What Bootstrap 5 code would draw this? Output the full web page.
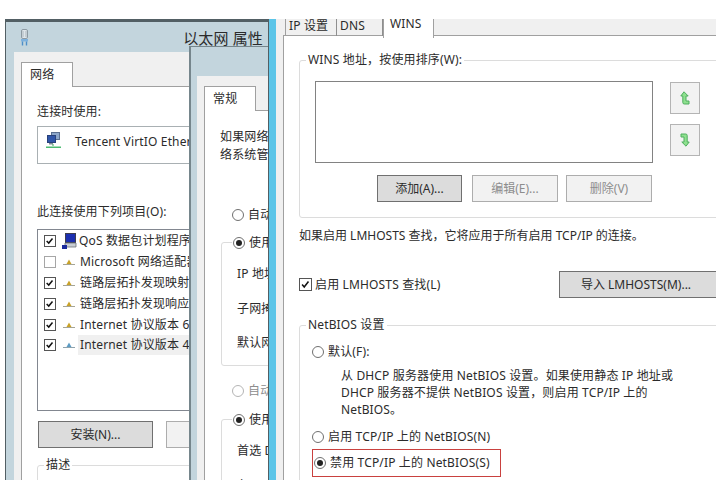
<!DOCTYPE html>
<html lang="zh-CN">
<head>
  <meta charset="UTF-8">
  <title>以太网 属性</title>
  <link href="https://cdn.jsdelivr.net/npm/bootstrap@5.3.0/dist/css/bootstrap.min.css" rel="stylesheet">
  <style>
    html, body { height: 100%; overflow: hidden; }
    body { background: #fff; color: #2b2b2b; font: 12px/18px "Noto Sans", "Noto Sans CJK SC", sans-serif; letter-spacing: .15px; position: relative; }
    svg { display: block; flex: none; }

    /* windows on the desktop */
    .desk-win { position: absolute; overflow: hidden; background: #c3d5dd; }
    .win-main { left: 5px; top: 19px; width: 264px; height: 461px; border: solid #525f64; border-width: 3px 1px 0 1px; }
    .win-inner { left: 183px; top: 24px; width: 82px; height: 437px; border-left: 2px solid #76868c; border-top: 1px solid #76868c; }
    .win-strip { position: absolute; left: 269px; top: 19px; width: 7px; height: 461px; background: #5cc5e8; }
    .win-right { left: 276px; top: 19px; width: 440px; height: 461px; background: #f0f0f0; }

    .title-row { height: 30px; padding: 7px 5px 0 14px; font-size: 15px; }
    .sheet { background: #f0f0f0; height: 100%; margin-left: 8px; padding: 10px 0 0 7px; }
    .inner-title { height: 29px; }
    .inner-sheet { margin-left: 6px; padding: 10px 0 0 7px; background: #f0f0f0; height: 100%; }

    .tab-item { display: block; background: #fff; border: 1px solid #a0a0a0; border-bottom: 0; width: 52px; height: 25px; padding: 3px 0 0 8px; margin-bottom: -1px; position: relative; }
    .tab-page { background: #fff; border: 1px solid #a0a0a0; height: 100%; padding: 0 0 0 15px; width: 400px; }

    .cap-a { margin-top: 16px; }
    .conn-box { border: 1px solid #a9b0b3; height: 38px; margin-top: 5px; padding: 5px 0 0 8px; gap: 14px; background: #fff; white-space: nowrap; }
    .conn-box span { margin-top: 1px; }
    .cap-b { margin-top: 39px; }
    .item-box { border: 1px solid #828790; height: 182px; margin-top: 8px; padding-top: 1px; white-space: nowrap; position: relative; }
    .item-row { height: 20.8px; padding-left: 6px; gap: 6px; }
    .item-row .item-txt { padding: 0 2px; line-height: 20px; margin-left: -4px; }
    .item-row .item-qos { margin-left: -7px; }
    .item-sel { background: #f0f0f0; width: 200px; }
    .chk { width: 12px; height: 12px; border: 1px solid #555; background: #fff; flex: none; }
    .chk-off { border-color: #a6a6a6; }

    .win-btn { --bs-btn-padding-y: 0; --bs-btn-padding-x: 0; --bs-btn-font-size: 12px; --bs-btn-line-height: 1; --bs-btn-border-radius: 0; --bs-btn-color: #2b2b2b; --bs-btn-bg: #dcdcdc; --bs-btn-border-color: #707070; height: 27px; flex: none; }
    .win-btn-off { --bs-btn-color: #8d8d8d; --bs-btn-bg: #f2f2f2; --bs-btn-border-color: #adadad; }
    .btn-row-l { margin: 10px 0 0 1px; gap: 13px; }

    .grp { border: 1px solid #dcdcdc; border-radius: 3px; padding: 0 0 15px 15px; margin: 0; min-width: 0; }
    .grp legend { float: none; width: auto; font-size: 12px; line-height: 18px; margin: 0 0 0 -9px; padding: 0 2px; }

    .radio-mark { width: 12px; height: 12px; border: 1px solid #707070; border-radius: 50%; background: #fff; flex: none; position: relative; }
    .radio-on::after { content: ""; position: absolute; left: 2px; top: 2px; width: 6px; height: 6px; background: #222; border-radius: 50%; }
    .radio-dim { border-color: #b5b5b5; }

    /* right hand dialog */
    .tab-strip { height: 17px; border-bottom: 1px solid #a0a0a0; margin-left: 7px; position: relative; padding-left: 2px; }
    .tab-back { height: 17px; border-right: 1px solid #8e8e8e; padding: 0 5px 0 3px; line-height: 13px; }
    .tab-back-a { width: 52px; border-left: 1px solid #a0a0a0; }
    .tab-back-b { width: 46px; }
    .tab-front { height: 19px; width: 51px; background: #fff; border: 1px solid #a0a0a0; border-top: 0; border-bottom: 0; padding: 0 0 0 6px; line-height: 9px; }
    .page-right { background: #fff; border-left: 1px solid #a0a0a0; margin-left: 7px; height: 444px; padding: 15px 0 0 15px; overflow: hidden; white-space: nowrap; }
    .grp-wins { width: 440px; }
    .list-empty { width: 338px; height: 82px; margin-top: 12px; border: 1px solid #828282; }
    .arrow-col { margin: 13px 0 0 17px; gap: 10px; }
    .arrow-btn { width: 30px; height: 32px; background: #f2f2f2; border: 1px solid #b4b4b4; }
    .wins-btns { margin: 12px 0 0 62px; }
    .btn-add { width: 85px; margin-right: 10px; }
    .btn-edit { width: 86px; margin-right: 8px; }
    .btn-del { width: 86px; }
    .note { margin-top: 9px; letter-spacing: 0; }
    .lm-row { margin-top: 26px; height: 27px; }
    .lm-chk { gap: 3px; }
    .lm-chk .chk { width: 13px; height: 13px; }
    .imp-btn { width: 170px; margin: 0 -13px 0 auto; padding-right: 16px; }
    .grp-net { width: 440px; margin-top: 18px; }
    .net-line { gap: 4px; margin-left: -3px; }
    .net-first { margin-top: 9px; }
    .net-desc { margin: 6px 0 0 26px; line-height: 17px; }
    .net-mid { margin-top: 10px; }
    .net-box { margin: 3px 0 0 -3px; width: 189px; height: 28px; border: 1px solid #c9413f; gap: 4px; padding-left: 1px; }

    /* inner dialog lines */
    .inner-page { padding: 0; width: 300px; white-space: nowrap; }
    .in-top { margin: 17px 0 0 15px; }
    .in-radio { gap: 4px; margin-left: 27px; }
    .in-auto { margin-top: 42px; }
    .in-grp { border: 1px solid #dcdcdc; border-radius: 3px; margin: 18px 0 0 16px; height: 124px; position: relative; padding: 22px 0 0 15px; }
    .in-grp-b { height: 120px; margin-top: 19px; }
    .in-grp .in-head { position: absolute; left: 10px; top: -9px; background: #fff; gap: 4px; padding: 0 1px; }
    .in-grp div.in-ln { height: 34.5px; line-height: 18px; }
    .in-dim { margin-top: 16px; color: #8d8d8d; }
  </style>
</head>
<body>
  <div class="desk-win win-main">
    <div class="title-row d-flex justify-content-between">
      <svg width="10" height="17" viewBox="0 0 10 17"><rect x="1.500" y=".5" width="6" height="9" rx="1.500" fill="#dfe6ea" stroke="#8d9aa2"/><path d="M3 2v6M6 2v6" stroke="#aab6bd"/><path d="M1 10h7v2.500H1z" fill="#7fb2de"/><path d="M2.500 12.500v4M6.500 12.500v4" stroke="#4d8fc9" stroke-width="1.400"/></svg>
      <span>以太网 属性</span>
    </div>
    <div class="sheet">
      <span class="tab-item">网络</span>
      <div class="tab-page">
        <div class="cap-a">连接时使用:</div>
        <div class="conn-box d-flex">
          <svg width="15" height="17" viewBox="0 0 15 17"><rect x="5.500" y=".5" width="8" height="7" fill="#8ca6c9" stroke="#5a6f8f"/><rect x="1.500" y="3.500" width="8" height="7" fill="#2f55a8" stroke="#28417a"/><path d="M3 11v1.500h4V11z" fill="#7d8a96"/><path d="M7 12v2" stroke="#3aa35d"/><path d="M0 14.500h15V16H0z" fill="#4dbb72"/></svg>
          <span>Tencent VirtIO Ethernet Adapter</span>
        </div>
        <div class="cap-b">此连接使用下列项目(O):</div>
        <div class="item-box">
          <div class="item-row d-flex align-items-center">
            <svg class="chk" viewBox="0 0 12 12"><path d="M2 6l2.500 2.500L9 3" fill="none" stroke="#111" stroke-width="1.800"/></svg>
            <svg width="16" height="16" viewBox="0 0 16 16"><rect x="3.500" y=".5" width="10" height="9" fill="#1c2fb0" stroke="#3d3d50"/><path d="M3 10h11v4H3z" fill="#c9ced3" stroke="#6c7278" stroke-width=".8"/><rect x="0" y="12" width="5" height="4" fill="#1a2a9c"/></svg>
            <span class="item-txt item-qos">QoS 数据包计划程序</span>
          </div>
          <div class="item-row d-flex align-items-center">
            <span class="chk chk-off"></span>
            <svg width="14" height="8" viewBox="0 0 14 8"><path d="M1 6.500h12" stroke="#a5a596"/><path d="M7 1.500l2.500 4.500h-5z" fill="#c9a227"/></svg>
            <span class="item-txt">Microsoft 网络适配器多路传送器协议</span>
          </div>
          <div class="item-row d-flex align-items-center">
            <svg class="chk" viewBox="0 0 12 12"><path d="M2 6l2.500 2.500L9 3" fill="none" stroke="#111" stroke-width="1.800"/></svg>
            <svg width="14" height="8" viewBox="0 0 14 8"><path d="M1 6.500h12" stroke="#a5a596"/><path d="M7 1.500l2.500 4.500h-5z" fill="#c9a227"/></svg>
            <span class="item-txt">链路层拓扑发现映射器 I/O 驱动程序</span>
          </div>
          <div class="item-row d-flex align-items-center">
            <svg class="chk" viewBox="0 0 12 12"><path d="M2 6l2.500 2.500L9 3" fill="none" stroke="#111" stroke-width="1.800"/></svg>
            <svg width="14" height="8" viewBox="0 0 14 8"><path d="M1 6.500h12" stroke="#a5a596"/><path d="M7 1.500l2.500 4.500h-5z" fill="#c9a227"/></svg>
            <span class="item-txt">链路层拓扑发现响应程序</span>
          </div>
          <div class="item-row d-flex align-items-center">
            <svg class="chk" viewBox="0 0 12 12"><path d="M2 6l2.500 2.500L9 3" fill="none" stroke="#111" stroke-width="1.800"/></svg>
            <svg width="14" height="8" viewBox="0 0 14 8"><path d="M1 6.500h12" stroke="#a5a596"/><path d="M7 1.500l2.500 4.500h-5z" fill="#c9a227"/></svg>
            <span class="item-txt">Internet 协议版本 6 (TCP/IPv6)</span>
          </div>
          <div class="item-row d-flex align-items-center">
            <svg class="chk" viewBox="0 0 12 12"><path d="M2 6l2.500 2.500L9 3" fill="none" stroke="#111" stroke-width="1.800"/></svg>
            <svg width="14" height="8" viewBox="0 0 14 8"><path d="M1 6.500h12" stroke="#8fa3ad"/><path d="M7 1.500l2.500 4.500h-5z" fill="#5b9bc4"/></svg>
            <span class="item-txt item-sel">Internet 协议版本 4 (TCP/IPv4)</span>
          </div>
        </div>
        <div class="btn-row-l d-flex">
          <button type="button" class="btn win-btn" style="width:115px">安装(N)...</button>
          <button type="button" class="btn win-btn win-btn-off" style="width:115px">卸载(U)</button>
        </div>
        <fieldset class="grp mt-2">
          <legend>描述</legend>
        </fieldset>
      </div>
    </div>

    <div class="desk-win win-inner">
      <div class="inner-title"></div>
      <div class="inner-sheet">
        <span class="tab-item">常规</span>
        <div class="tab-page inner-page">
          <div class="in-top">如果网络支持此功能，<br>络系统管理员处获得</div>
          <div class="in-radio in-auto d-flex align-items-center"><span class="radio-mark"></span><span>自动获得 IP 地址</span></div>
          <div class="in-grp">
            <div class="in-head d-flex align-items-center"><span class="radio-mark radio-on"></span><span>使用下面的 IP 地址</span></div>
            <div class="in-ln">IP 地址(I):</div>
            <div class="in-ln">子网掩码(U):</div>
            <div class="in-ln">默认网关(D):</div>
          </div>
          <div class="in-radio in-dim d-flex align-items-center"><span class="radio-mark radio-dim"></span><span>自动获得 DNS</span></div>
          <div class="in-grp in-grp-b">
            <div class="in-head d-flex align-items-center"><span class="radio-mark radio-on"></span><span>使用下面的 DNS</span></div>
            <div class="in-ln">首选 DNS 服务器(P):</div>
            <div class="in-ln">备用 DNS 服务器(A):</div>
          </div>
        </div>
      </div>
    </div>
  </div>

  <div class="win-strip"></div>

  <div class="desk-win win-right">
    <div class="tab-strip d-flex">
      <div class="tab-back tab-back-a">IP 设置</div>
      <div class="tab-back tab-back-b">DNS</div>
      <div class="tab-front">WINS</div>
    </div>
    <div class="page-right">
      <fieldset class="grp grp-wins">
        <legend>WINS 地址，按使用排序(W):</legend>
        <div class="d-flex">
          <div class="list-empty"></div>
          <div class="arrow-col d-flex flex-column">
            <div class="arrow-btn d-flex align-items-center justify-content-center">
              <svg width="10" height="14" viewBox="0 0 10 14"><path d="M4 .8L.8 5h2v6.500q0 1.500 1.500 1.500H9v-3H6V5h2.200z" fill="#8ee08e" stroke="#4fae5f"/></svg>
            </div>
            <div class="arrow-btn d-flex align-items-center justify-content-center">
              <svg width="10" height="14" viewBox="0 0 10 14"><path d="M6 13.200L9.200 9h-2V2.500Q7.200 1 5.700 1H1v3h3v5H1.800z" fill="#8ee08e" stroke="#4fae5f"/></svg>
            </div>
          </div>
        </div>
        <div class="wins-btns d-flex">
          <button type="button" class="btn win-btn btn-add">添加(A)...</button>
          <button type="button" class="btn win-btn win-btn-off btn-edit">编辑(E)...</button>
          <button type="button" class="btn win-btn win-btn-off btn-del">删除(V)</button>
        </div>
      </fieldset>
      <div class="note">如果启用 LMHOSTS 查找，它将应用于所有启用 TCP/IP 的连接。</div>
      <div class="lm-row d-flex align-items-center">
        <div class="lm-chk d-flex align-items-center">
          <svg class="chk" viewBox="0 0 13 13"><path d="M2.500 6.500l2.500 3L10 3" fill="none" stroke="#111" stroke-width="1.800"/></svg>
          <span>启用 LMHOSTS 查找(L)</span>
        </div>
        <button type="button" class="btn win-btn imp-btn">导入 LMHOSTS(M)...</button>
      </div>
      <fieldset class="grp grp-net">
        <legend>NetBIOS 设置</legend>
        <div class="net-line net-first d-flex align-items-center"><span class="radio-mark"></span><span>默认(F):</span></div>
        <div class="net-desc">从 DHCP 服务器使用 NetBIOS 设置。如果使用静态 IP 地址或<br>DHCP 服务器不提供 NetBIOS 设置，则启用 TCP/IP 上的<br>NetBIOS。</div>
        <div class="net-line net-mid d-flex align-items-center"><span class="radio-mark"></span><span>启用 TCP/IP 上的 NetBIOS(N)</span></div>
        <div class="net-box d-flex align-items-center"><span class="radio-mark radio-on"></span><span>禁用 TCP/IP 上的 NetBIOS(S)</span></div>
      </fieldset>
    </div>
  </div>
  <script src="https://cdn.jsdelivr.net/npm/bootstrap@5.3.0/dist/js/bootstrap.bundle.min.js"></script>
</body>
</html>
